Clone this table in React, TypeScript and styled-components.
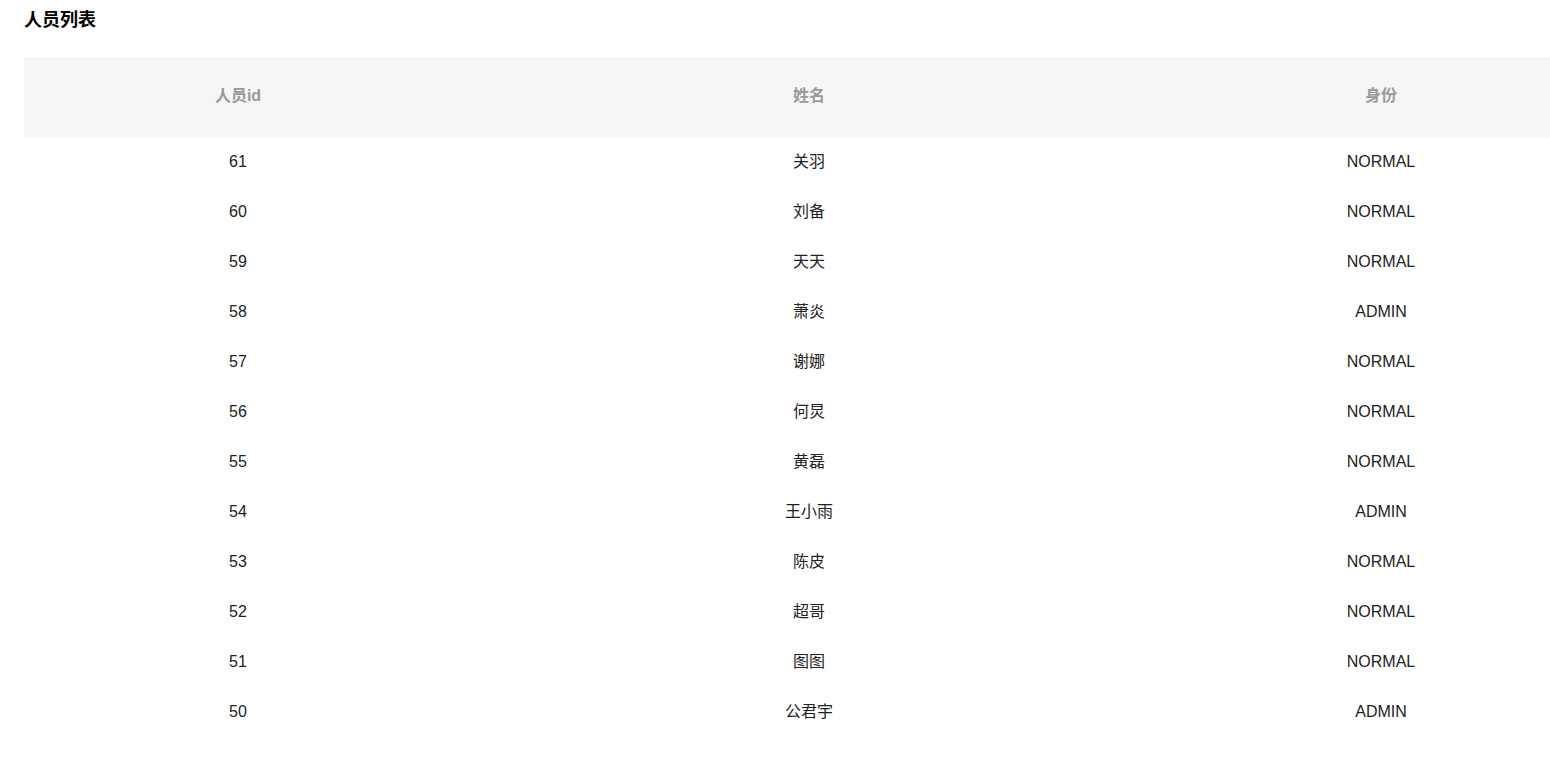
import styled, { createGlobalStyle } from "styled-components";

const GlobalStyle = createGlobalStyle`
  html, body {
    margin: 0;
    padding: 0;
    background: #ffffff;
    overflow-x: hidden;
  }
  body {
    font-family: "Liberation Sans", Arial, "Noto Sans CJK SC", sans-serif;
  }
`;

const Page = styled.div`
  padding: 8px 0 0 24px;
`;

const Title = styled.h3`
  margin: 0 0 25px;
  font-size: 18px;
  line-height: 24px;
  font-weight: bold;
  color: #000;
`;

const Table = styled.table`
  width: 1572px;
  border-collapse: collapse;
  table-layout: fixed;
  font-size: 16px;
  line-height: 20px;
`;

const TH = styled.th`
  height: 80px;
  padding: 0 0 2px;
  box-sizing: border-box;
  background: #f6f6f6;
  color: #999999;
  font-weight: bold;
  text-align: center;
`;

const TD = styled.td`
  height: 50px;
  padding: 0 0 1px;
  box-sizing: border-box;
  color: #222222;
  text-align: center;
`;

type Person = { id: number; name: string; role: "NORMAL" | "ADMIN" };

const people: Person[] = [
  { id: 61, name: "关羽", role: "NORMAL" },
  { id: 60, name: "刘备", role: "NORMAL" },
  { id: 59, name: "天天", role: "NORMAL" },
  { id: 58, name: "萧炎", role: "ADMIN" },
  { id: 57, name: "谢娜", role: "NORMAL" },
  { id: 56, name: "何炅", role: "NORMAL" },
  { id: 55, name: "黄磊", role: "NORMAL" },
  { id: 54, name: "王小雨", role: "ADMIN" },
  { id: 53, name: "陈皮", role: "NORMAL" },
  { id: 52, name: "超哥", role: "NORMAL" },
  { id: 51, name: "图图", role: "NORMAL" },
  { id: 50, name: "公君宇", role: "ADMIN" },
];

function App() {
  return (
    <>
      <GlobalStyle />
      <Page>
        <Title>人员列表</Title>
        <Table>
          <colgroup>
            <col style={{ width: 428 }} />
            <col style={{ width: 714 }} />
            <col style={{ width: 430 }} />
          </colgroup>
          <thead>
            <tr>
              <TH>人员id</TH>
              <TH>姓名</TH>
              <TH>身份</TH>
            </tr>
          </thead>
          <tbody>
            {people.map((p) => (
              <tr key={p.id}>
                <TD>{p.id}</TD>
                <TD>{p.name}</TD>
                <TD>{p.role}</TD>
              </tr>
            ))}
          </tbody>
        </Table>
      </Page>
    </>
  );
}

export default App;
